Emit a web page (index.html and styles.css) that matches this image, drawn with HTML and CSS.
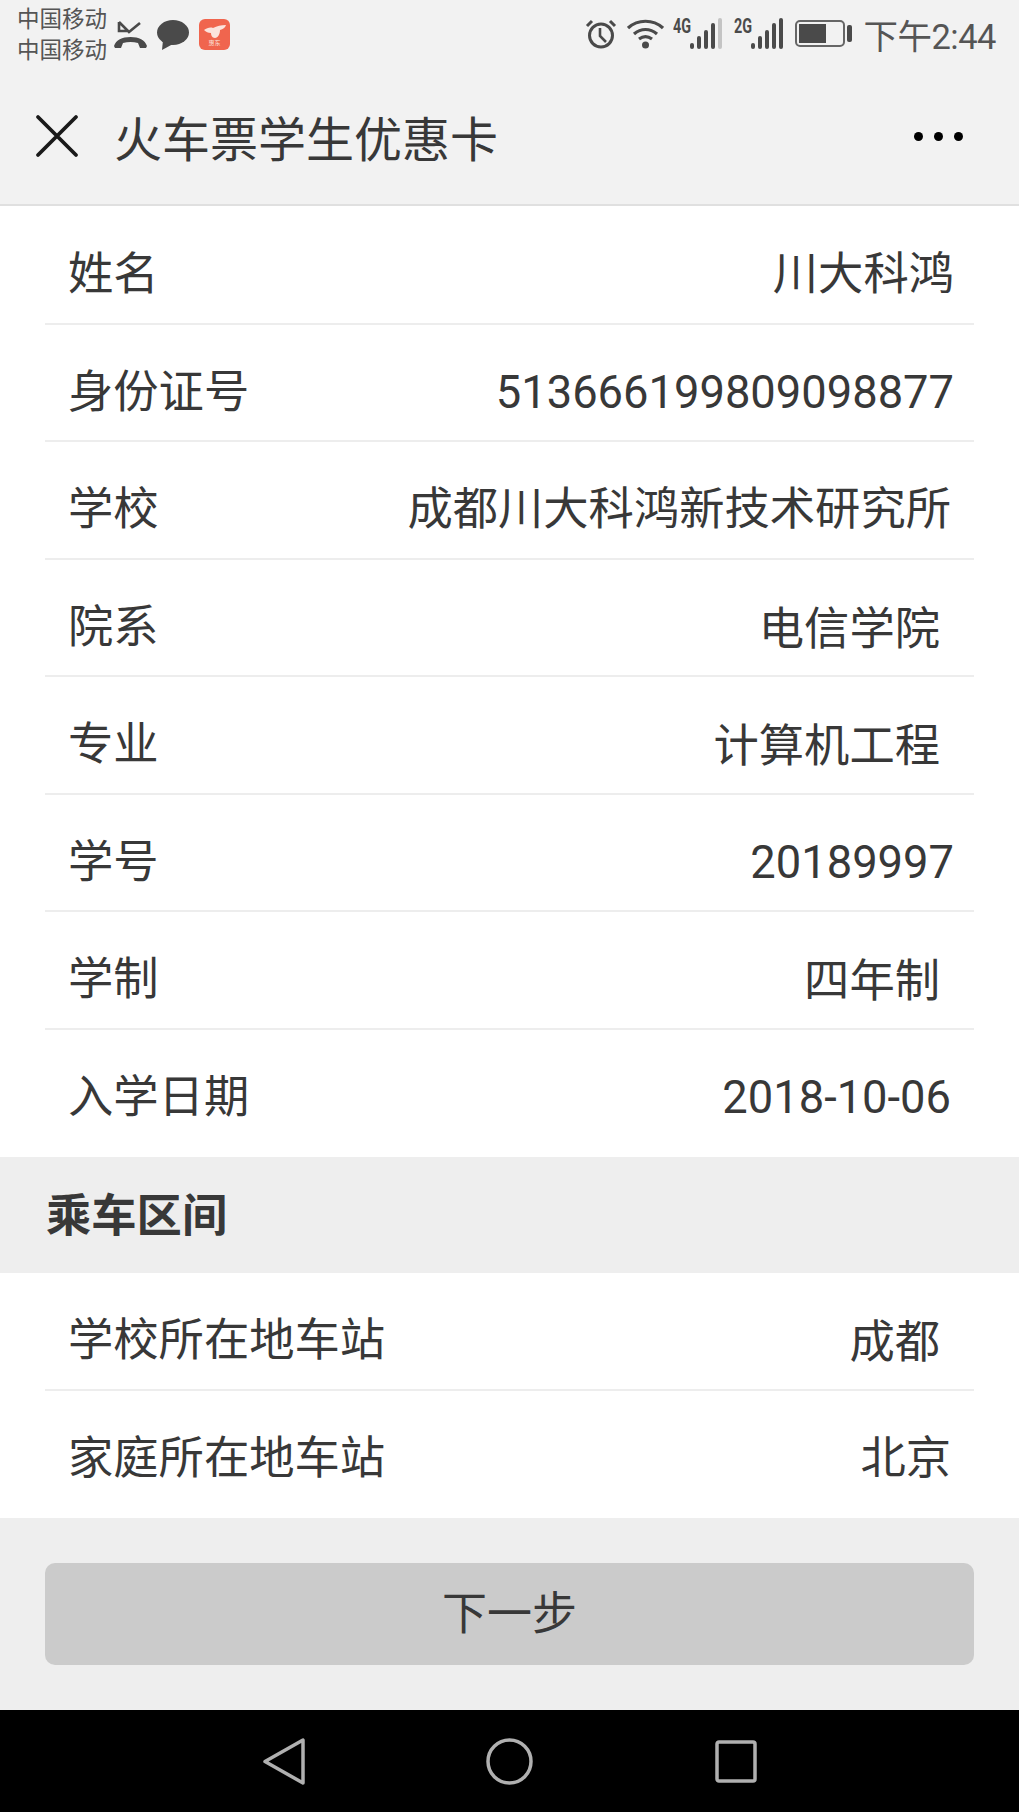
FILE: index.html
```html
<!DOCTYPE html>
<html lang="zh-CN">
<head>
  <meta charset="UTF-8">
  <title>火车票学生优惠卡</title>
  <meta name="viewport" content="width=device-width, initial-scale=1.0">
  <link rel="stylesheet" href="styles.css">
</head>
<body>

  <div class="status-bar">
    <div class="carriers">
      <span>中国移动</span>
      <span>中国移动</span>
    </div>
    <svg class="ic-call" width="33" height="30" viewBox="0 0 33 30">
      <path d="M5 2v9h9M5 2l10 10 11-9" fill="none" stroke="#4a4a4a" stroke-width="2.600"/>
      <path d="M0 26c2-6 8-9 16.500-9S31 20 33 26l-1 2h-6l-2-5c-5-1.500-10-1.500-15 0l-2 5H1z" fill="#4a4a4a"/>
    </svg>
    <svg class="ic-chat" width="32" height="30" viewBox="0 0 32 30">
      <ellipse cx="16" cy="12.500" rx="16" ry="12.500" fill="#4a4a4a"/>
      <path d="M6 20l-1 10 11-6z" fill="#4a4a4a"/>
    </svg>
    <div class="app-badge">
      <svg width="24" height="15" viewBox="0 0 24 15">
        <path d="M1 6c3-2 6-3 9-2 4-2 8-3 13-3-1 3-3 4-6 5 0 4-2 8-5 8s-4-3-4-5C5 9 3 8 1 6z" fill="#fbe3dd"/>
      </svg>
      <span>惠东</span>
    </div>
    <div class="status-right">
      <svg class="ic-alarm" width="32" height="31" viewBox="0 0 32 31">
        <circle cx="16" cy="17.500" r="11.500" fill="none" stroke="#4a4a4a" stroke-width="3"/>
        <path d="M15 10v8l6 6" fill="none" stroke="#4a4a4a" stroke-width="2.600"/>
        <path d="M2 8l5-5M30 8l-5-5" stroke="#4a4a4a" stroke-width="3"/>
      </svg>
      <svg class="ic-wifi" width="37" height="30" viewBox="0 0 37 30">
        <path d="M1 9c10-9 25-9 35 0M7 15c7-6 16-6 23 0M12 20c4-3 9-3 13 0" fill="none" stroke="#4a4a4a" stroke-width="3.200"/>
        <circle cx="18.500" cy="26" r="3.500" fill="#4a4a4a"/>
      </svg>
      <div class="signal">
        <span class="net">4G</span>
        <i class="bar b1"></i><i class="bar b2"></i><i class="bar b3"></i><i class="bar b4"></i><i class="bar b5 off"></i>
      </div>
      <div class="signal">
        <span class="net">2G</span>
        <i class="bar b1"></i><i class="bar b2"></i><i class="bar b3"></i><i class="bar b4"></i><i class="bar b5"></i>
      </div>
      <div class="battery"><div class="battery-fill"></div></div>
      <div class="battery-tip"></div>
      <span class="clock">下午2:44</span>
    </div>
  </div>

  <div class="nav-bar">
    <svg class="ic-close" width="44" height="44" viewBox="0 0 44 44">
      <path d="M3 3l38 38M41 3L3 41" stroke="#1a1a1a" stroke-width="3.800" stroke-linecap="round"/>
    </svg>
    <h1 class="nav-title">火车票学生优惠卡</h1>
    <div class="nav-more"><i></i><i></i><i></i></div>
  </div>

  <div class="list first-list">
    <div class="row"><span>姓名</span><span>川大科鸿</span></div>
    <div class="row"><span>身份证号</span><span>513666199809098877</span></div>
    <div class="row"><span>学校</span><span class="shift-s">成都川大科鸿新技术研究所</span></div>
    <div class="row"><span>院系</span><span class="shift-l">电信学院</span></div>
    <div class="row"><span>专业</span><span class="shift-l">计算机工程</span></div>
    <div class="row"><span>学号</span><span>20189997</span></div>
    <div class="row"><span>学制</span><span class="shift-l">四年制</span></div>
    <div class="row"><span>入学日期</span><span class="shift-s">2018-10-06</span></div>
  </div>

  <div class="section-head">乘车区间</div>

  <div class="list">
    <div class="row"><span>学校所在地车站</span><span class="shift-l">成都</span></div>
    <div class="row"><span>家庭所在地车站</span><span class="shift-s">北京</span></div>
  </div>

  <div class="footer-area">
    <button class="next-btn">下一步</button>
  </div>

  <div class="android-nav">
    <svg width="42" height="47" viewBox="0 0 42 47">
      <path d="M40 2v43L2 23.500z" fill="none" stroke="#b0b0b0" stroke-width="3.500" stroke-linejoin="round"/>
    </svg>
    <svg width="47" height="47" viewBox="0 0 47 47">
      <circle cx="23.500" cy="23.500" r="21.500" fill="none" stroke="#b0b0b0" stroke-width="3.500"/>
    </svg>
    <svg width="42" height="43" viewBox="0 0 42 43">
      <rect x="2" y="2" width="38" height="39" rx="2" fill="none" stroke="#b0b0b0" stroke-width="3.500"/>
    </svg>
  </div>

</body>
</html>
```

FILE: styles.css
```css
* {
  box-sizing: border-box;
}
body {
  margin: 0;
  width: 1019px;
  height: 1812px;
  overflow: hidden;
  background-color: #eeeeee;
  color: #383838;
  font-family: "Roboto", "Noto Sans CJK SC", sans-serif;
}
.status-bar {
  height: 70px;
  background-color: #f2f2f2;
  display: flex;
  align-items: center;
  padding: 0 23px 0 17px;
}
.carriers {
  display: flex;
  flex-direction: column;
  font-size: 22.500px;
  line-height: 31px;
  color: #555;
  margin-right: 7px;
}
.ic-call {
  margin-right: 10px;
}
.ic-chat {
  margin-right: 10px;
}
.app-badge {
  width: 31px;
  height: 31px;
  margin-bottom: 1px;
  background-color: #f0654e;
  border-radius: 6px;
  display: flex;
  flex-direction: column;
  align-items: center;
  justify-content: center;
  color: #fbe3dd;
  font-size: 6px;
  line-height: 7px;
}
.status-right {
  margin-left: auto;
  padding-bottom: 3px;
  display: flex;
  align-items: center;
}
.ic-alarm {
  margin-right: 10px;
}
.ic-wifi {
  margin-right: 9px;
}
.signal {
  position: relative;
  width: 49px;
  height: 31px;
  margin-right: 12px;
  display: flex;
  align-items: flex-end;
  justify-content: flex-end;
  gap: 3px;
}
.net {
  position: absolute;
  top: -1px;
  left: 0;
  font-family: "Roboto", sans-serif;
  font-weight: 700;
  font-size: 20px;
  line-height: 18px;
  transform: scaleX(0.72);
  transform-origin: left top;
  color: #4a4a4a;
}
.bar {
  display: block;
  width: 4px;
  background-color: #4a4a4a;
  border-radius: 2px;
}
.b1 { height: 6px; }
.b2 { height: 13px; }
.b3 { height: 19px; }
.b4 { height: 26px; }
.b5 { height: 31px; }
.bar.off {
  background-color: #c4c4c4;
}
.battery {
  width: 50px;
  height: 27px;
  border: 2px solid #666;
  border-radius: 5px;
  padding: 2px;
}
.battery-fill {
  width: 27px;
  height: 100%;
  background-color: #4a4a4a;
}
.battery-tip {
  width: 5px;
  height: 17px;
  margin-left: 2px;
  margin-right: 11px;
  background-color: #4a4a4a;
  border-radius: 2px;
}
.clock {
  font-size: 34.500px;
  color: #555;
  letter-spacing: -0.5px;
}
.nav-bar {
  height: 136px;
  background-color: #f2f2f2;
  border-bottom: 2px solid #e0e0e0;
  display: flex;
  align-items: center;
  padding: 0 56px 2px 35px;
}
.ic-close {
  margin-right: 35px;
}
.nav-title {
  margin: 0;
  font-size: 48px;
  font-weight: 400;
}
.nav-more {
  margin-left: auto;
  display: flex;
  gap: 11px;
}
.nav-more i {
  width: 9px;
  height: 9px;
  background-color: #000;
  border-radius: 50%;
}
.list {
  background-color: #fff;
  padding: 0 45px;
}
.first-list {
  padding-top: 1px;
}
.row {
  height: 117.500px;
  display: flex;
  justify-content: space-between;
  align-items: flex-start;
  padding: 38px 20px 0 23px;
  border-bottom: 2px solid #ededed;
  font-size: 45.300px;
  line-height: 60px;
}
.row:last-child {
  height: 127.500px;
  border-bottom: none;
}
.shift-s {
  margin-right: 3px;
}
.shift-l {
  margin-right: 14px;
  margin-top: 2px;
}
.section-head {
  height: 116px;
  padding: 0 0 7px 46px;
  display: flex;
  align-items: center;
  font-size: 45.300px;
  font-weight: 700;
}
.footer-area {
  height: 192px;
  padding: 45px 45px 0;
}
.next-btn {
  display: block;
  width: 100%;
  height: 102px;
  padding: 0 0 8px;
  border: none;
  border-radius: 10px;
  background-color: #cbcbcb;
  color: #383838;
  font-family: inherit;
  font-size: 45px;
}
.android-nav {
  height: 102px;
  background-color: #000;
  display: grid;
  grid-template-columns: repeat(3, 226px);
  justify-content: center;
  justify-items: center;
  align-items: center;
}
```
